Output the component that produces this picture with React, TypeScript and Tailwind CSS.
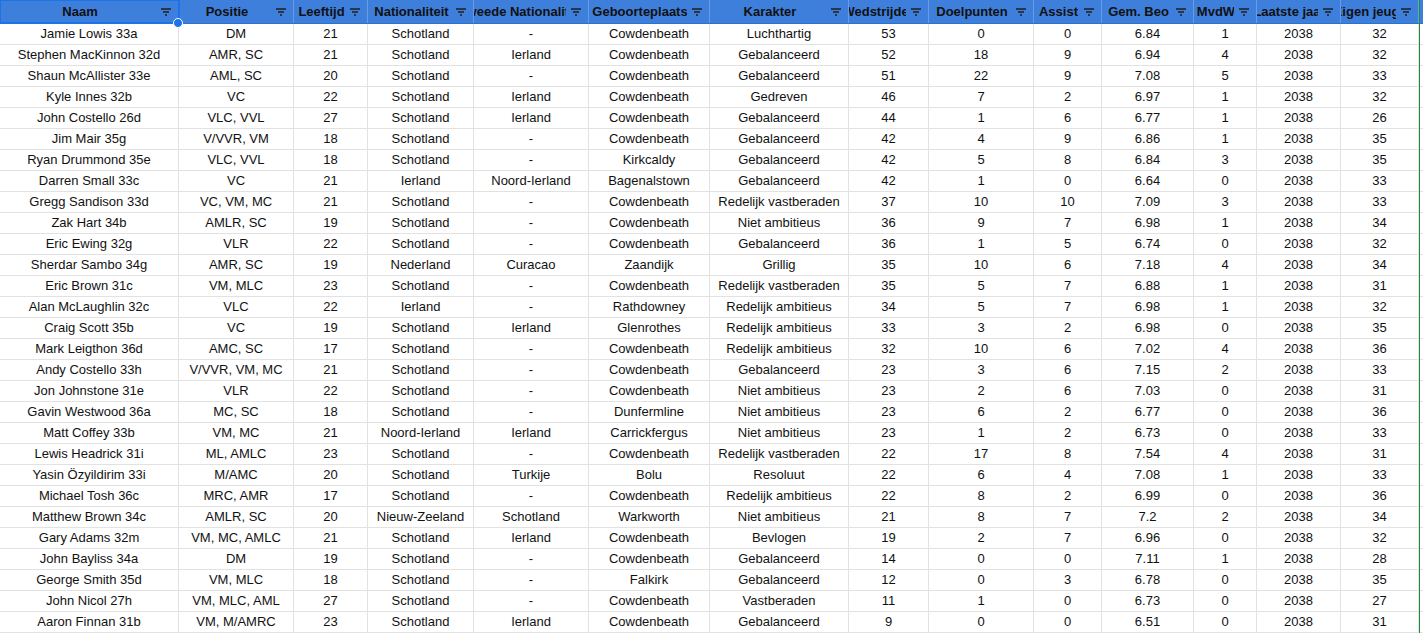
import React from 'react'

const cols = [
  { h: 'Naam', w: 179 },
  { h: 'Positie', w: 115 },
  { h: 'Leeftijd', w: 74 },
  { h: 'Nationaliteit', w: 106 },
  { h: 'Tweede Nationaliteit', w: 115 },
  { h: 'Geboorteplaats', w: 121 },
  { h: 'Karakter', w: 139 },
  { h: 'Wedstrijden', w: 80 },
  { h: 'Doelpunten', w: 105 },
  { h: 'Assist', w: 68 },
  { h: 'Gem. Beo', w: 92 },
  { h: 'MvdW', w: 63 },
  { h: 'Laatste jaar', w: 84 },
  { h: 'Eigen jeugd', w: 78 },
]

const raw = `Jamie Lowis 33a|DM|21|Schotland|-|Cowdenbeath|Luchthartig|53|0|0|6.84|1|2038|32
Stephen MacKinnon 32d|AMR, SC|21|Schotland|Ierland|Cowdenbeath|Gebalanceerd|52|18|9|6.94|4|2038|32
Shaun McAllister 33e|AML, SC|20|Schotland|-|Cowdenbeath|Gebalanceerd|51|22|9|7.08|5|2038|33
Kyle Innes 32b|VC|22|Schotland|Ierland|Cowdenbeath|Gedreven|46|7|2|6.97|1|2038|32
John Costello 26d|VLC, VVL|27|Schotland|Ierland|Cowdenbeath|Gebalanceerd|44|1|6|6.77|1|2038|26
Jim Mair 35g|V/VVR, VM|18|Schotland|-|Cowdenbeath|Gebalanceerd|42|4|9|6.86|1|2038|35
Ryan Drummond 35e|VLC, VVL|18|Schotland|-|Kirkcaldy|Gebalanceerd|42|5|8|6.84|3|2038|35
Darren Small 33c|VC|21|Ierland|Noord-Ierland|Bagenalstown|Gebalanceerd|42|1|0|6.64|0|2038|33
Gregg Sandison 33d|VC, VM, MC|21|Schotland|-|Cowdenbeath|Redelijk vastberaden|37|10|10|7.09|3|2038|33
Zak Hart 34b|AMLR, SC|19|Schotland|-|Cowdenbeath|Niet ambitieus|36|9|7|6.98|1|2038|34
Eric Ewing 32g|VLR|22|Schotland|-|Cowdenbeath|Gebalanceerd|36|1|5|6.74|0|2038|32
Sherdar Sambo 34g|AMR, SC|19|Nederland|Curacao|Zaandijk|Grillig|35|10|6|7.18|4|2038|34
Eric Brown 31c|VM, MLC|23|Schotland|-|Cowdenbeath|Redelijk vastberaden|35|5|7|6.88|1|2038|31
Alan McLaughlin 32c|VLC|22|Ierland|-|Rathdowney|Redelijk ambitieus|34|5|7|6.98|1|2038|32
Craig Scott 35b|VC|19|Schotland|Ierland|Glenrothes|Redelijk ambitieus|33|3|2|6.98|0|2038|35
Mark Leigthon 36d|AMC, SC|17|Schotland|-|Cowdenbeath|Redelijk ambitieus|32|10|6|7.02|4|2038|36
Andy Costello 33h|V/VVR, VM, MC|21|Schotland|-|Cowdenbeath|Gebalanceerd|23|3|6|7.15|2|2038|33
Jon Johnstone 31e|VLR|22|Schotland|-|Cowdenbeath|Niet ambitieus|23|2|6|7.03|0|2038|31
Gavin Westwood 36a|MC, SC|18|Schotland|-|Dunfermline|Niet ambitieus|23|6|2|6.77|0|2038|36
Matt Coffey 33b|VM, MC|21|Noord-Ierland|Ierland|Carrickfergus|Niet ambitieus|23|1|2|6.73|0|2038|33
Lewis Headrick 31i|ML, AMLC|23|Schotland|-|Cowdenbeath|Redelijk vastberaden|22|17|8|7.54|4|2038|31
Yasin Özyildirim 33i|M/AMC|20|Schotland|Turkije|Bolu|Resoluut|22|6|4|7.08|1|2038|33
Michael Tosh 36c|MRC, AMR|17|Schotland|-|Cowdenbeath|Redelijk ambitieus|22|8|2|6.99|0|2038|36
Matthew Brown 34c|AMLR, SC|20|Nieuw-Zeeland|Schotland|Warkworth|Niet ambitieus|21|8|7|7.2|2|2038|34
Gary Adams 32m|VM, MC, AMLC|21|Schotland|Ierland|Cowdenbeath|Bevlogen|19|2|7|6.96|0|2038|32
John Bayliss 34a|DM|19|Schotland|-|Cowdenbeath|Gebalanceerd|14|0|0|7.11|1|2038|28
George Smith 35d|VM, MLC|18|Schotland|-|Falkirk|Gebalanceerd|12|0|3|6.78|0|2038|35
John Nicol 27h|VM, MLC, AML|27|Schotland|-|Cowdenbeath|Vastberaden|11|1|0|6.73|0|2038|27
Aaron Finnan 31b|VM, M/AMRC|23|Schotland|Ierland|Cowdenbeath|Gebalanceerd|9|0|0|6.51|0|2038|31`

const rows = raw.split('\n').map(l => l.split('|'))

function FilterIcon() {
  return (
    <svg width="12" height="10" viewBox="0 0 12 10" className="shrink-0">
      <path d="M1 2h10M3 5h6M5 8h2" stroke="#1f1f1f" strokeWidth="1.4" />
    </svg>
  )
}

export default function App() {
  return (
    <div className="w-[1423px] h-[633px] overflow-hidden bg-white relative" style={{ fontFamily: '"Liberation Sans", Arial, sans-serif' }}>
      <div className="flex h-[24px] bg-[#3f7fdc] border-b border-[#2f6fd0]">
        {cols.map((c, i) => (
          <div
            key={i}
            className={`relative flex items-center h-full border-r border-[#6b9be4] ${i === 0 ? 'outline outline-2 outline-[#1a73e8] -outline-offset-1' : ''}`}
            style={{ width: c.w }}
          >
            <div className="flex-1 min-w-0 overflow-hidden flex justify-center pl-1">
              <span className="whitespace-nowrap text-[13px] font-bold text-[#111]">{c.h}</span>
            </div>
            <div className="bg-[#3f7fdc] pl-1 pr-[6px] h-full flex items-center">
              <FilterIcon />
            </div>
            {i === 0 && (
              <div className="absolute -right-[5px] -bottom-[5px] w-[10px] h-[10px] rounded-full bg-[#1a73e8] border border-white z-10" />
            )}
          </div>
        ))}
      </div>
      {rows.map((r, ri) => (
        <div key={ri} className="flex h-[21px] border-b border-[#e2e2e2]">
          {r.map((v, ci) => (
            <div
              key={ci}
              className="flex items-center justify-center border-r border-[#e2e2e2] text-[13px] text-[#111] whitespace-nowrap overflow-hidden"
              style={{ width: cols[ci].w }}
            >
              {v}
            </div>
          ))}
        </div>
      ))}
      <div className="absolute right-[3px] top-0 bottom-0 w-[1px] bg-[#1e8e3e]" />
    </div>
  )
}
